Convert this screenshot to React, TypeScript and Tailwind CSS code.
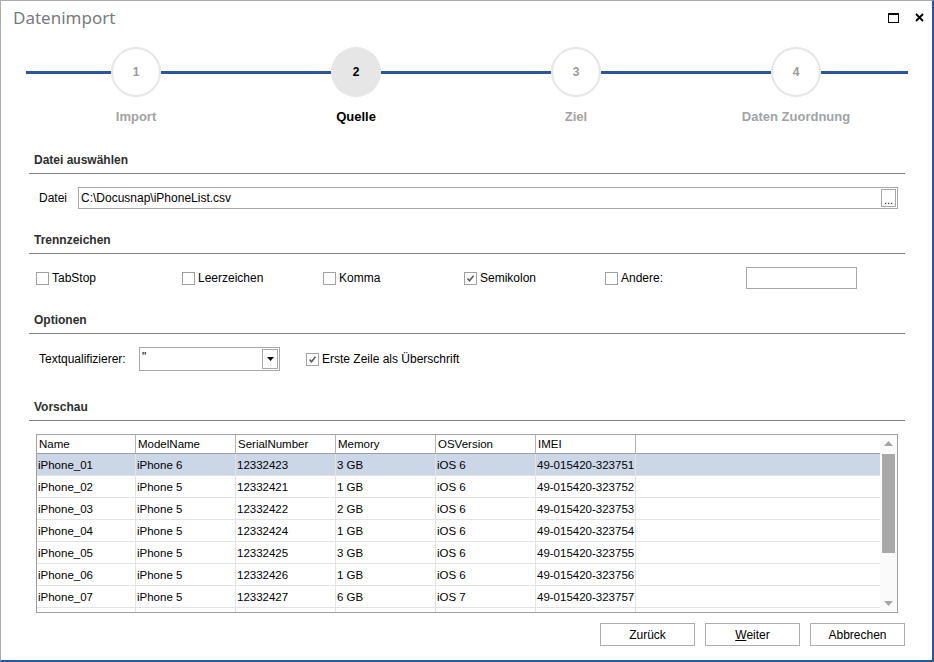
import React from 'react';

const rows = [
  ['iPhone_01', 'iPhone 6', '12332423', '3 GB', 'iOS 6', '49-015420-323751'],
  ['iPhone_02', 'iPhone 5', '12332421', '1 GB', 'iOS 6', '49-015420-323752'],
  ['iPhone_03', 'iPhone 5', '12332422', '2 GB', 'iOS 6', '49-015420-323753'],
  ['iPhone_04', 'iPhone 5', '12332424', '1 GB', 'iOS 6', '49-015420-323754'],
  ['iPhone_05', 'iPhone 5', '12332425', '3 GB', 'iOS 6', '49-015420-323755'],
  ['iPhone_06', 'iPhone 5', '12332426', '1 GB', 'iOS 6', '49-015420-323756'],
  ['iPhone_07', 'iPhone 5', '12332427', '6 GB', 'iOS 7', '49-015420-323757'],
  // only the top few pixels of this row are visible
  ['', '', '', '', '', ''],
];

const columns = ['Name', 'ModelName', 'SerialNumber', 'Memory', 'OSVersion', 'IMEI'];

function Step({ n, label, active }: { n: number; label: string; active?: boolean }) {
  return (
    <div className="flex flex-col items-center w-[50px]">
      <div
        className={
          active
            ? 'w-[50px] h-[50px] rounded-full bg-[#e6e6e6] flex items-center justify-center text-[12px] font-bold text-black'
            : 'w-[50px] h-[50px] rounded-full border-2 border-[#e6e6e6] bg-white flex items-center justify-center text-[12px] font-bold text-[#9a9a9a]'
        }
      >
        {n}
      </div>
      <div
        className={
          active
            ? 'mt-[12px] whitespace-nowrap text-[13px] leading-[16px] font-bold text-black'
            : 'mt-[12px] whitespace-nowrap text-[13px] leading-[16px] font-bold text-[#a3a3a3]'
        }
      >
        {label}
      </div>
    </div>
  );
}

function Segment({ w }: { w: string }) {
  return <div className={`${w} h-[3px] mt-[24px] bg-[#2b579a]`} />;
}

function Heading({ children, mt }: { children: React.ReactNode; mt: string }) {
  return (
    <div className={`${mt} pl-[5px] pb-[5px] border-b border-[#828282] text-[12px] leading-[16px] font-bold text-[#2e2e2e]`}>
      {children}
    </div>
  );
}

function Checkbox({ label, checked, className }: { label: string; checked?: boolean; className?: string }) {
  return (
    <div className={`flex items-center ${className ?? ''}`}>
      <div className="w-[13px] h-[13px] border border-[#a0a0a0] bg-white flex items-center justify-center">
        {checked && (
          <svg width="9" height="9" viewBox="0 0 9 9">
            <path d="M1.5 4.5 L3.5 6.8 L7.5 1.8" stroke="#5a5a5a" strokeWidth="1.6" fill="none" />
          </svg>
        )}
      </div>
      <span className="ml-[3px] text-[12px] text-black">{label}</span>
    </div>
  );
}

function Arrow({ up }: { up?: boolean }) {
  return (
    <div className="h-[17px] flex items-center justify-center">
      <svg width="9" height="5" viewBox="0 0 9 5">
        {up ? <path d="M0 5 L4.5 0 L9 5 Z" fill="#a6a6a6" /> : <path d="M0 0 L4.5 5 L9 0 Z" fill="#a6a6a6" />}
      </svg>
    </div>
  );
}

export default function App() {
  return (
    <div className="w-[934px] h-[662px] bg-white border-t border-l border-[#ababab] border-r-2 border-b-2 border-r-[#2b579a] border-b-[#2b579a] flex flex-col font-['Liberation_Sans',Arial,sans-serif] overflow-hidden">
      {/* title bar */}
      <div className="h-[33px] flex items-center justify-between pl-[12px] pr-[8px]">
        <span className="text-[17px] text-[#7a7a7a] font-['Noto_Sans',sans-serif]">Datenimport</span>
        <div className="flex items-center">
          <div className="w-[11px] h-[10px] border border-t-2 border-black" />
          <svg className="ml-[16px]" width="9" height="9" viewBox="0 0 9 9">
            <path d="M1 1 L8 8 M8 1 L1 8" stroke="#000" strokeWidth="1.8" />
          </svg>
        </div>
      </div>

      {/* stepper */}
      <div className="mt-[13px] flex items-start pl-[25px]">
        <Segment w="w-[85px]" />
        <Step n={1} label="Import" />
        <Segment w="w-[170px]" />
        <Step n={2} label="Quelle" active />
        <Segment w="w-[170px]" />
        <Step n={3} label="Ziel" />
        <Segment w="w-[170px]" />
        <Step n={4} label="Daten Zuordnung" />
        <Segment w="w-[87px]" />
      </div>

      <div className="pl-[28px] pr-[27px] flex flex-col">
        <Heading mt="mt-[27px]">Datei auswählen</Heading>
        <div className="mt-[13px] h-[22px] flex items-center pl-[10px] pr-[7px]">
          <span className="w-[39px] text-[12px] text-black">Datei</span>
          <div className="flex-1 h-[22px] border border-[#a8a8a8] flex items-center">
            <span className="pl-[2px] text-[12px] text-black">C:\Docusnap\iPhoneList.csv</span>
            <div className="ml-auto mr-[1px] w-[15px] h-[18px] border border-[#a8a8a8] flex items-end justify-center text-[11px] leading-[12px] text-black">
              ...
            </div>
          </div>
        </div>

        <Heading mt="mt-[23px]">Trennzeichen</Heading>
        <div className="mt-[13px] h-[22px] flex items-center pl-[7px]">
          <Checkbox label="TabStop" className="w-[146px]" />
          <Checkbox label="Leerzeichen" className="w-[141px]" />
          <Checkbox label="Komma" className="w-[141px]" />
          <Checkbox label="Semikolon" checked className="w-[141px]" />
          <Checkbox label="Andere:" className="w-[141px]" />
          <div className="w-[111px] h-[22px] border border-[#a8a8a8]" />
        </div>

        <Heading mt="mt-[23px]">Optionen</Heading>
        <div className="mt-[13px] h-[24px] flex items-center pl-[10px]">
          <span className="w-[100px] text-[12px] text-black">Textqualifizierer:</span>
          <div className="w-[141px] h-[24px] border border-[#a8a8a8] flex items-start">
            <span className="pl-[2px] pt-[1px] text-[12px] leading-[16px] text-black">"</span>
            <div className="ml-auto mr-[1px] mt-[1px] w-[16px] h-[20px] border border-[#a8a8a8] flex items-center justify-center">
              <svg width="7" height="4" viewBox="0 0 7 4">
                <path d="M0 0 L3.5 4 L7 0 Z" fill="#000" />
              </svg>
            </div>
          </div>
          <Checkbox label="Erste Zeile als Überschrift" checked className="ml-[26px]" />
        </div>

        <Heading mt="mt-[28px]">Vorschau</Heading>

        {/* preview grid */}
        <div className="mt-[13px] ml-[7px] w-[862px] h-[179px] border border-[#a0a0a0] flex overflow-hidden">
          <div className="flex-1 flex flex-col overflow-hidden">
            <div className="h-[19px] shrink-0 flex border-b border-[#a0a0a0]">
              {columns.map((c, i) => (
                <div
                  key={c}
                  className={`${i === 0 ? 'w-[99px]' : 'w-[100px]'} shrink-0 h-full border-r border-[#b4b4b4] pl-[2px] text-[11.5px] leading-[19px] text-black`}
                >
                  {c}
                </div>
              ))}
              <div className="flex-1" />
            </div>
            {rows.map((r, ri) => (
              <div
                key={ri}
                className={`h-[22px] shrink-0 flex border-b border-[#e3e3e3] ${ri === 0 ? 'bg-[#cbd6e7]' : 'bg-white'}`}
              >
                {r.map((v, i) => (
                  <div
                    key={i}
                    className={`${i === 0 ? 'w-[99px]' : 'w-[100px]'} shrink-0 h-full border-r border-[#e3e3e3] pl-[1px] text-[11.5px] leading-[22px] text-black whitespace-nowrap`}
                  >
                    {v}
                  </div>
                ))}
                <div className="flex-1" />
              </div>
            ))}
          </div>
          <div className="w-[17px] shrink-0 flex flex-col bg-[#fafafa]">
            <Arrow up />
            <div className="mt-[2px] mx-[2px] h-[99px] bg-[#a9a9a9]" />
            <div className="flex-1" />
            <Arrow />
          </div>
        </div>

        {/* buttons */}
        <div className="mt-[10px] flex justify-end gap-[10px]">
          <button className="w-[95px] h-[23px] border border-[#adadad] bg-white text-[12px] text-black">Zurück</button>
          <button className="w-[95px] h-[23px] border border-[#adadad] bg-white text-[12px] text-black">
            <span className="underline">W</span>eiter
          </button>
          <button className="w-[95px] h-[23px] border border-[#adadad] bg-white text-[12px] text-black">Abbrechen</button>
        </div>
      </div>
    </div>
  );
}
